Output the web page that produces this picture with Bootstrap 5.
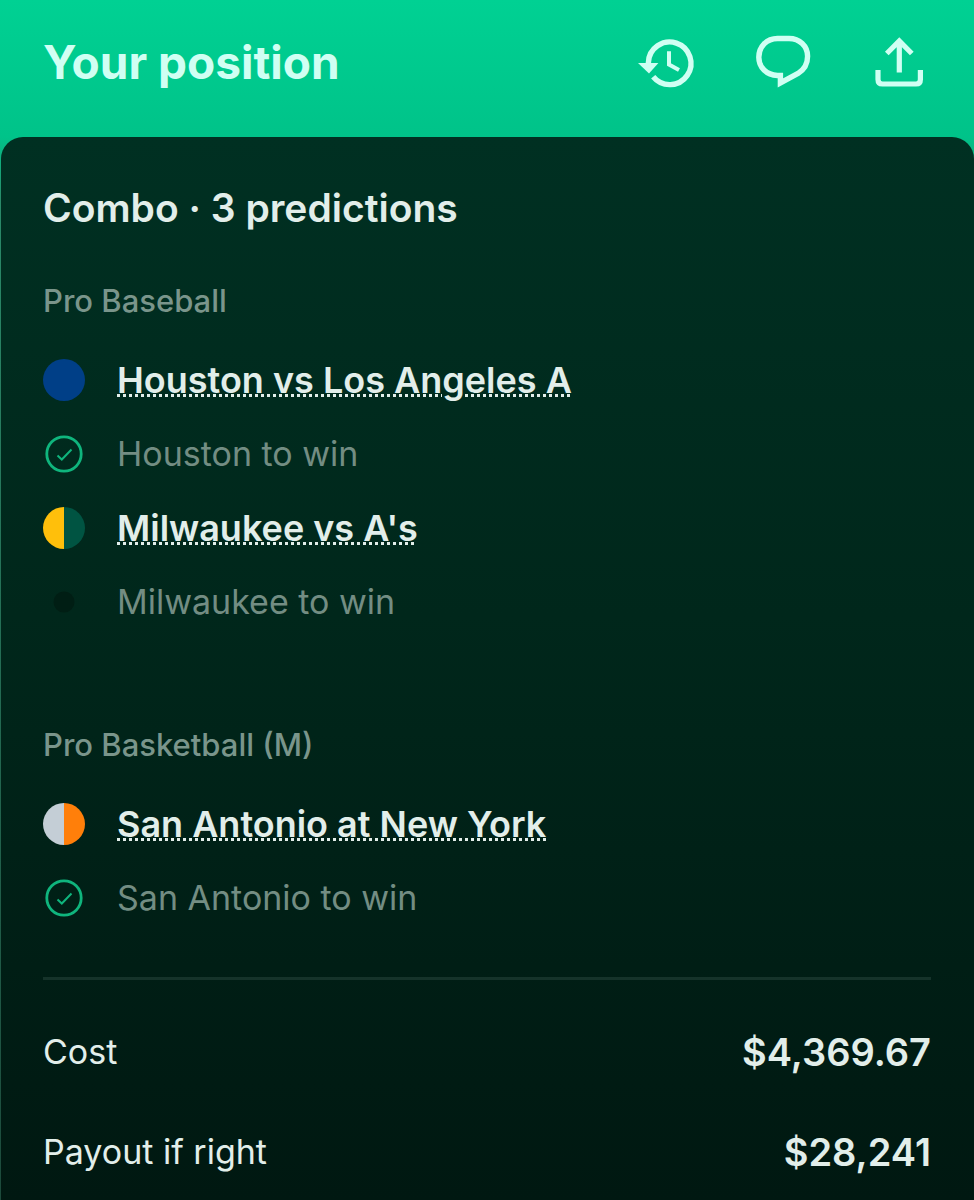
<!DOCTYPE html>
<html lang="en">
<head>
<meta charset="utf-8">
<meta name="viewport" content="width=device-width, initial-scale=1">
<title>Your position</title>
<link href="https://cdn.jsdelivr.net/npm/bootstrap@5.3.0/dist/css/bootstrap.min.css" rel="stylesheet">
<style>
body{font-family:Inter,"Liberation Sans",sans-serif;background:#001811;color:#e2eeea}
.page-shell{background:linear-gradient(#00d193,#00c389 137px,#2a8a69 200px,#1c4a3b)}
.top-bar{padding:32px 45px 45px 43px;color:#d0fff3}
.top-title{font-size:46px;font-weight:700;line-height:60px}
.top-actions{gap:56px}
.icon-btn{width:60px;height:60px;color:inherit}
.icon-btn svg{display:block}
.panel{margin-left:1px;border-radius:22px 22px 0 0;background:linear-gradient(#003022,#00271b 45%,#001811);padding:44px 43px 16px 42px}
.panel-title{font-size:39px;line-height:54px;font-weight:600;margin-bottom:46px}
.league{font-size:31px;line-height:40px;font-weight:500;color:#7a958b;margin-bottom:22px}
.league-group + .league-group{margin-top:86px}
.leg-row{min-height:74px;gap:32px}
.leg-icon{width:42px;height:42px}
.leg-link{font-size:36px;line-height:44px;font-weight:600;color:#e2eeea;text-decoration:underline dotted 3px;text-underline-offset:1px}
.leg-link:hover{color:#fff}
.leg-pick{font-size:34px;line-height:44px;color:#738d83}
.divider{height:3px;margin:42px 0;background:#15332a;border:0;opacity:1}
.summary{gap:40px}
.sum-row{line-height:60px}
.sum-label{font-size:34px;font-weight:400}
.sum-value{font-size:38px;font-weight:600}
</style>
</head>
<body>
<div class="page-shell d-flex flex-column min-vh-100">
  <header class="top-bar d-flex align-items-center justify-content-between">
    <h1 class="top-title m-0">Your position</h1>
    <div class="top-actions d-flex">
      <button type="button" class="icon-btn btn p-0 border-0" aria-label="History">
        <svg width="60" height="60" viewBox="0 0 60 60" fill="none" stroke="currentColor" stroke-width="5.4"><path d="M11.4 32v-1.500A21.300 21.300 0 1 1 16.200 44.800"/><path d="M32 19.300V32.500L42 38" stroke-width="4"/><path d="M1 31H21.400L12 41.500Z" fill="currentColor" stroke="none"/></svg>
      </button>
      <button type="button" class="icon-btn btn p-0 border-0" aria-label="Comments">
        <svg width="60" height="60" viewBox="0 0 60 60" fill="none" stroke="currentColor" stroke-width="5.4"><path d="M24.500 6.500H36C46.500 6.500 54.600 14 54.600 24.300C54.600 32 51.500 37.500 45 41.500L27.400 51V43.500H24.500C13.500 43 5.800 35.500 5.800 25.300C5.800 14.500 13.700 6.500 24.500 6.500Z"/></svg>
      </button>
      <button type="button" class="icon-btn btn p-0 border-0" aria-label="Share">
        <svg width="60" height="60" viewBox="0 0 60 60" fill="none" stroke="currentColor" stroke-width="5.2"><path d="M30.300 40.500V9M17.800 21.500L30.300 9L42.800 21.500M9 38V47.500Q9 52 13.500 52H47Q51.400 52 51.400 47.500V38"/></svg>
      </button>
    </div>
  </header>

  <main class="panel flex-grow-1">
    <h2 class="panel-title">Combo · 3 predictions</h2>

    <section class="league-group">
      <h3 class="league">Pro Baseball</h3>
      <div class="leg-row d-flex align-items-center">
        <svg class="leg-icon flex-shrink-0" viewBox="0 0 42 42" aria-hidden="true"><circle cx="21" cy="21" r="21" fill="#003f87"/></svg>
        <a class="leg-link" href="#">Houston vs Los Angeles A</a>
      </div>
      <div class="leg-row d-flex align-items-center">
        <svg class="leg-icon flex-shrink-0" viewBox="0 0 42 42" fill="none" stroke="#0fb57d" aria-label="Won"><circle cx="21" cy="21" r="17.200" stroke-width="2.800"/><path d="M14.500 22.500L18.800 26.500L28.500 16.500" stroke-width="2"/></svg>
        <span class="leg-pick">Houston to win</span>
      </div>
      <div class="leg-row d-flex align-items-center">
        <svg class="leg-icon flex-shrink-0" viewBox="0 0 42 42" aria-hidden="true"><path d="M21 0A21 21 0 0 0 21 42Z" fill="#ffbf0b"/><path d="M21 0A21 21 0 0 1 21 42Z" fill="#005442"/></svg>
        <a class="leg-link" href="#">Milwaukee vs A's</a>
      </div>
      <div class="leg-row d-flex align-items-center">
        <svg class="leg-icon flex-shrink-0" viewBox="0 0 42 42" aria-label="Pending"><circle cx="21" cy="21" r="10.500" fill="#001e14"/></svg>
        <span class="leg-pick">Milwaukee to win</span>
      </div>
    </section>

    <section class="league-group">
      <h3 class="league">Pro Basketball (M)</h3>
      <div class="leg-row d-flex align-items-center">
        <svg class="leg-icon flex-shrink-0" viewBox="0 0 42 42" aria-hidden="true"><path d="M21 0A21 21 0 0 0 21 42Z" fill="#c4ced6"/><path d="M21 0A21 21 0 0 1 21 42Z" fill="#ff7f0a"/></svg>
        <a class="leg-link" href="#">San Antonio at New York</a>
      </div>
      <div class="leg-row d-flex align-items-center">
        <svg class="leg-icon flex-shrink-0" viewBox="0 0 42 42" fill="none" stroke="#0fb57d" aria-label="Won"><circle cx="21" cy="21" r="17.200" stroke-width="2.800"/><path d="M14.500 22.500L18.800 26.500L28.500 16.500" stroke-width="2"/></svg>
        <span class="leg-pick">San Antonio to win</span>
      </div>
    </section>

    <hr class="divider">

    <dl class="summary d-flex flex-column m-0">
      <div class="sum-row d-flex justify-content-between">
        <dt class="sum-label">Cost</dt>
        <dd class="sum-value m-0">$4,369.67</dd>
      </div>
      <div class="sum-row d-flex justify-content-between">
        <dt class="sum-label">Payout if right</dt>
        <dd class="sum-value m-0">$28,241</dd>
      </div>
    </dl>
  </main>
</div>
<script src="https://cdn.jsdelivr.net/npm/bootstrap@5.3.0/dist/js/bootstrap.bundle.min.js"></script>
</body>
</html>
